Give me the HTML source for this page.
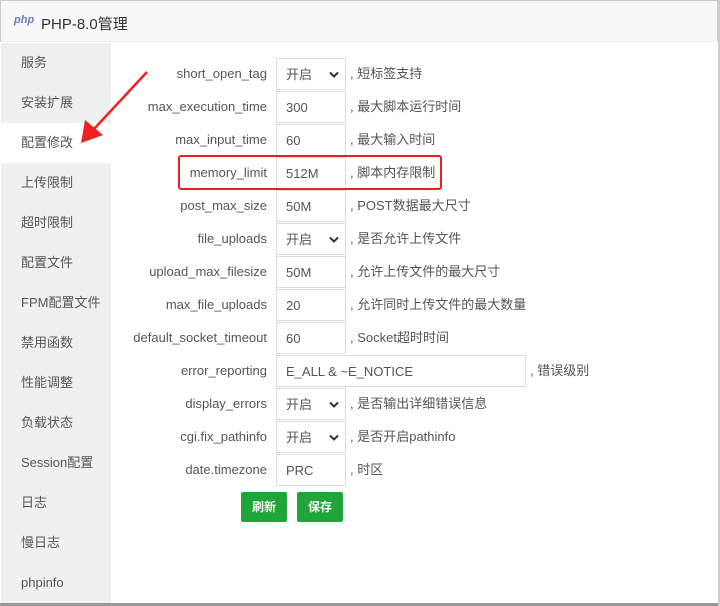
<!DOCTYPE html><html><head><meta charset="utf-8"><style>
body{margin:0;width:720px;height:606px;overflow:hidden;background:#fff;font-family:"Liberation Sans","Noto Sans CJK SC",sans-serif;font-size:13px;color:#555;position:relative}
.title{position:absolute;left:0;top:0;width:718px;height:42px;background:#f8f8f8;border:1px solid #ccc;border-bottom:1px solid #eee;box-sizing:border-box}
.title .t{position:absolute;left:40px;top:12px;font-size:15px;color:#333}
.title .p{position:absolute;left:13px;top:13px;font-size:11px;font-style:italic;font-weight:bold;color:#6b7eb5}
.side{position:absolute;left:1px;top:43px;width:110px;height:560px;background:#f0f0f0}
.side div{height:40px;line-height:40px;padding-left:20px;color:#555}
.side .a{background:#fff}
.row{position:absolute;left:111px;height:32px;line-height:32px}
.lb{position:absolute;left:0;width:156px;text-align:right;color:#555}
.in{position:absolute;left:165px;width:70px;height:32px;border:1px solid #ddd;box-sizing:border-box;padding-left:9px;color:#555}
.dt{position:absolute;left:239px;white-space:nowrap;color:#555}
.chev{position:absolute;right:6px;top:12px}
.btn{position:absolute;top:492px;width:46px;height:30px;background:#20a53a;color:#fff;border-radius:2px;text-align:center;line-height:30px;font-size:12px;font-weight:bold}
</style></head><body>
<div class="title"><span class="p">php</span><span class="t">PHP-8.0管理</span></div>
<div class="side"><div>服务</div><div>安装扩展</div><div class="a">配置修改</div><div>上传限制</div><div>超时限制</div><div>配置文件</div><div>FPM配置文件</div><div>禁用函数</div><div>性能调整</div><div>负载状态</div><div>Session配置</div><div>日志</div><div>慢日志</div><div>phpinfo</div></div>
<div style="position:absolute;left:0;top:603px;width:720px;height:3px;background:#999"></div>
<div style="position:absolute;left:718px;top:0;width:2px;height:606px;background:#ccc"></div>

<div class="row" style="top:58px"><span class="lb">short_open_tag</span><span class="in">开启<svg class="chev" width="10" height="8"><path d="M1 1.5L5 5.5L9 1.5" stroke="#333" stroke-width="2" fill="none"/></svg></span><span class="dt">, 短标签支持</span></div>
<div class="row" style="top:91px"><span class="lb">max_execution_time</span><span class="in">300</span><span class="dt">, 最大脚本运行时间</span></div>
<div class="row" style="top:124px"><span class="lb">max_input_time</span><span class="in">60</span><span class="dt">, 最大输入时间</span></div>
<div class="row" style="top:157px"><span class="lb">memory_limit</span><span class="in">512M</span><span class="dt">, 脚本内存限制</span></div>
<div class="row" style="top:190px"><span class="lb">post_max_size</span><span class="in">50M</span><span class="dt">, POST数据最大尺寸</span></div>
<div class="row" style="top:223px"><span class="lb">file_uploads</span><span class="in">开启<svg class="chev" width="10" height="8"><path d="M1 1.5L5 5.5L9 1.5" stroke="#333" stroke-width="2" fill="none"/></svg></span><span class="dt">, 是否允许上传文件</span></div>
<div class="row" style="top:256px"><span class="lb">upload_max_filesize</span><span class="in">50M</span><span class="dt">, 允许上传文件的最大尺寸</span></div>
<div class="row" style="top:289px"><span class="lb">max_file_uploads</span><span class="in">20</span><span class="dt">, 允许同时上传文件的最大数量</span></div>
<div class="row" style="top:322px"><span class="lb">default_socket_timeout</span><span class="in">60</span><span class="dt">, Socket超时时间</span></div>
<div class="row" style="top:355px"><span class="lb">error_reporting</span><span class="in" style="width:250px">E_ALL &amp; ~E_NOTICE</span><span class="dt" style="left:419px">, 错误级别</span></div>
<div class="row" style="top:388px"><span class="lb">display_errors</span><span class="in">开启<svg class="chev" width="10" height="8"><path d="M1 1.5L5 5.5L9 1.5" stroke="#333" stroke-width="2" fill="none"/></svg></span><span class="dt">, 是否输出详细错误信息</span></div>
<div class="row" style="top:421px"><span class="lb">cgi.fix_pathinfo</span><span class="in">开启<svg class="chev" width="10" height="8"><path d="M1 1.5L5 5.5L9 1.5" stroke="#333" stroke-width="2" fill="none"/></svg></span><span class="dt">, 是否开启pathinfo</span></div>
<div class="row" style="top:454px"><span class="lb">date.timezone</span><span class="in">PRC</span><span class="dt">, 时区</span></div>
<div class="btn" style="left:241px">刷新</div><div class="btn" style="left:297px">保存</div>
<div style="position:absolute;left:178px;top:155px;width:260px;height:31px;border:2px solid #e82020;border-radius:3px"></div>
<svg style="position:absolute;left:0;top:0" width="720" height="606"><line x1="147" y1="72" x2="94" y2="129" stroke="#f02020" stroke-width="2.5"/><polygon points="81,143 85,120 103,135" fill="#f02020"/></svg>
</body></html>
